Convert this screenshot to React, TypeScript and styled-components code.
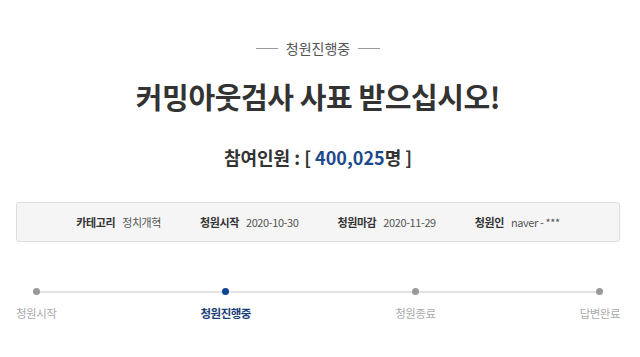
import styled, { createGlobalStyle } from 'styled-components';

const GlobalStyle = createGlobalStyle`
  body {
    margin: 0;
    background: #fff;
    font-family: 'Noto Sans CJK KR', 'Noto Sans', sans-serif;
    color: #333;
  }
`;

type Step = { label: string; active?: boolean };

const steps: Step[] = [
  { label: '청원시작' },
  { label: '청원진행중', active: true },
  { label: '청원종료' },
  { label: '답변완료' },
];

const infos = [
  { label: '카테고리', value: '정치개혁' },
  { label: '청원시작', value: '2020-10-30' },
  { label: '청원마감', value: '2020-11-29' },
  { label: '청원인', value: 'naver - ***' },
];

const App = () => {
  return (
    <Page>
      <GlobalStyle />
      <Status>
        <Dash />
        청원진행중
        <Dash />
      </Status>
      <Title>커밍아웃검사 사표 받으십시오!</Title>
      <Count>
        참여인원 : [ <Num>400,025</Num>명 ]
      </Count>
      <InfoBox>
        {infos.map((info) => (
          <InfoItem key={info.label}>
            <InfoLabel>{info.label}</InfoLabel>
            <InfoValue>{info.value}</InfoValue>
          </InfoItem>
        ))}
      </InfoBox>
      <Timeline>
        {steps.map((step) => (
          <StepItem key={step.label}>
            <Dot $active={step.active} />
            <StepLabel $active={step.active}>{step.label}</StepLabel>
          </StepItem>
        ))}
      </Timeline>
    </Page>
  );
};

const Page = styled.div`
  padding: 38px 20px 0 16px;
  display: flex;
  flex-direction: column;
  align-items: stretch;
`;

const Status = styled.div`
  display: flex;
  align-items: center;
  justify-content: center;
  gap: 8px;
  font-size: 14px;
  line-height: 20px;
  color: #555;
`;

const Dash = styled.span`
  display: block;
  width: 22px;
  height: 1px;
  background: #999;
`;

const Title = styled.h1`
  margin: 20px 0 0;
  text-align: center;
  font-size: 29px;
  line-height: 36px;
  font-weight: 700;
  color: #333;
  letter-spacing: -0.4px;
`;

const Count = styled.div`
  margin-top: 31px;
  text-align: center;
  font-size: 18px;
  line-height: 24px;
  font-weight: 700;
  color: #333;
`;

const Num = styled.span`
  color: #1c4a8c;
`;

const InfoBox = styled.div`
  margin-top: 33px;
  height: 40px;
  box-sizing: border-box;
  border: 1px solid #dedede;
  border-radius: 3px;
  background: #f5f5f5;
  display: flex;
  align-items: center;
  justify-content: center;
  gap: 39px;
`;

const InfoItem = styled.div`
  display: flex;
  align-items: center;
  gap: 7px;
  font-size: 11px;
  line-height: 16px;
  letter-spacing: -0.4px;
`;

const InfoLabel = styled.span`
  font-weight: 700;
  color: #333;
`;

const InfoValue = styled.span`
  color: #555;
`;

const Timeline = styled.div`
  position: relative;
  margin-top: 46px;
  display: flex;
  justify-content: space-between;

  &::before {
    content: '';
    position: absolute;
    top: 3px;
    left: 20px;
    right: 19px;
    height: 2px;
    background: #e2e2e2;
  }
`;

const StepItem = styled.div`
  position: relative;
  display: flex;
  flex-direction: column;
  align-items: center;
  gap: 10px;
`;

const Dot = styled.span<{ $active?: boolean }>`
  display: block;
  width: 7px;
  height: 7px;
  border-radius: 50%;
  background: ${({ $active }) => ($active ? '#0c4594' : '#999')};
`;

const StepLabel = styled.span<{ $active?: boolean }>`
  font-size: 11.5px;
  line-height: 16px;
  letter-spacing: -0.5px;
  font-weight: ${({ $active }) => ($active ? 700 : 400)};
  color: ${({ $active }) => ($active ? '#1b3e78' : '#aaa')};
`;

export default App;
